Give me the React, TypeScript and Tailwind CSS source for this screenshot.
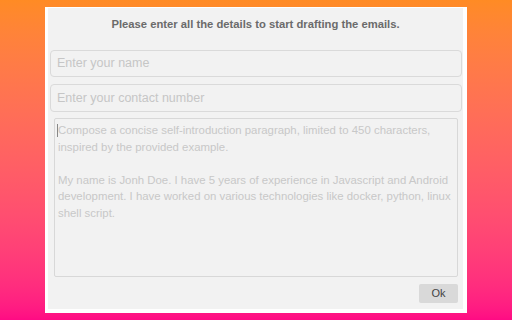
import React from "react";

export default function App() {
  const font = { fontFamily: '"Liberation Sans", Arial, sans-serif' };
  return (
    <div
      className="w-[512px] h-[320px] overflow-hidden bg-linear-to-b from-[#ff8b24] to-[#ff0a84] pl-[45px] pt-[7px]"
      style={font}
    >
      <div className="w-[422px] h-[306px] bg-white pt-[1px] pl-[3px] pr-[4px] pb-[4px]">
        <div className="h-full bg-[#f2f2f2] flex flex-col">
          <div className="pt-[10px] h-[42px] text-center text-[11.25px] leading-[13px] font-bold text-[#6b6b6b]">
            Please enter all the details to start drafting the emails.
          </div>
          <div className="ml-[2px] mr-[1px] h-[27px] rounded-[4px] border border-[#dadada] flex items-center pl-[6px] text-[12.5px] text-[#c6c6c6]">
            Enter your name
          </div>
          <div className="ml-[2px] mr-[1px] mt-[7px] h-[28px] rounded-[4px] border border-[#dadada] flex items-center pl-[6px] text-[12.5px] text-[#c6c6c6]">
            Enter your contact number
          </div>
          <div className="ml-[6px] mr-[5px] mt-[6px] h-[159px] rounded-[2px] border border-[#d8d8d8] pl-[3px] pt-[3px] text-[11.4px] leading-[16.5px] text-[#c8c8c8] whitespace-nowrap">
            <div className="relative">
              <span className="absolute left-[-1px] top-[2px] w-px h-[13px] bg-[#888]" />
              Compose a concise self-introduction paragraph, limited to 450 characters,
            </div>
            <div>inspired by the provided example.</div>
            <div className="h-[16.5px]" />
            <div>My name is Jonh Doe. I have 5 years of experience in Javascript and Android</div>
            <div>development. I have worked on various technologies like docker, python, linux</div>
            <div>shell script.</div>
          </div>
          <div className="flex justify-end mr-[5px] mt-[7px]">
            <div className="w-[39px] h-[19px] bg-[#d9d9d9] rounded-[2px] flex items-center justify-center text-[11px] text-[#444]">
              Ok
            </div>
          </div>
        </div>
      </div>
    </div>
  );
}
